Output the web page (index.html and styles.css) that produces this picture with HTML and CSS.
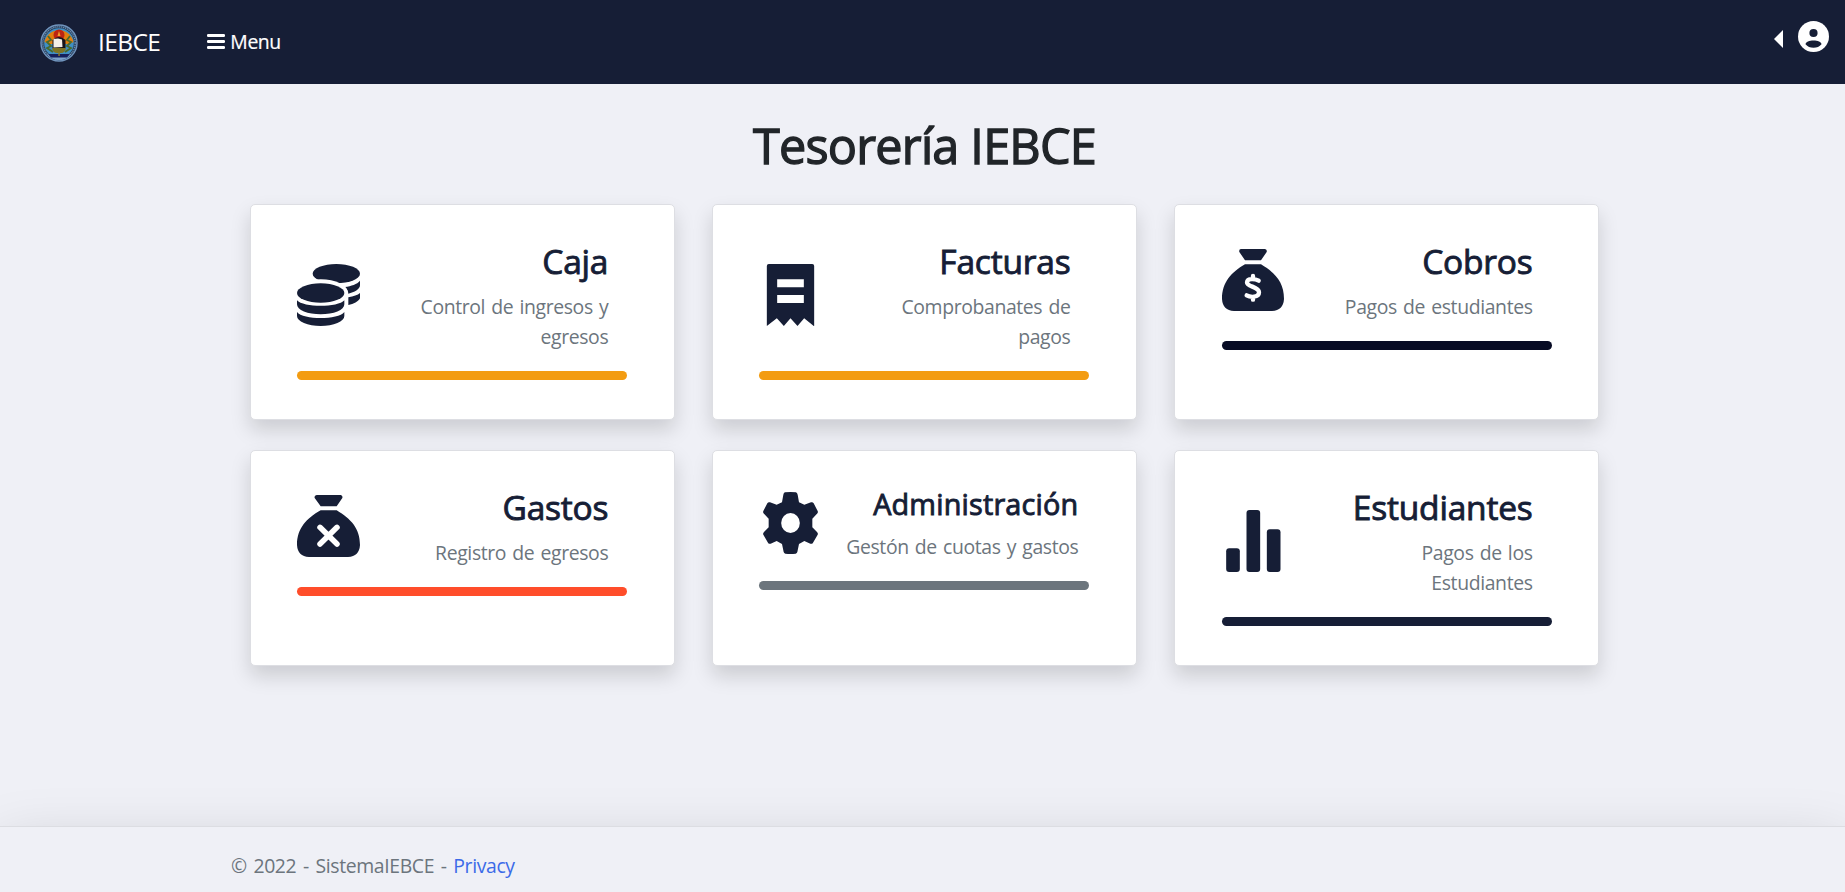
FILE: index.html
```html
<!DOCTYPE html>
<html lang="es">
<head>
<meta charset="utf-8">
<title>Tesorería IEBCE</title>
<link rel="stylesheet" href="styles.css">
</head>
<body>
<header class="navbar">
  <svg class="logo" viewBox="0 0 38 38">
    <circle cx="19" cy="19" r="18" fill="#27405f" stroke="#7094bd" stroke-width="1.4"/>
    <circle cx="19" cy="19" r="16.2" fill="none" stroke="#6f8fb0" stroke-width="1.3" stroke-dasharray="1.2 .8"/>
    <circle cx="19" cy="19" r="14.8" fill="#3f8fc4"/>
    <path d="M4.500 18A14.800 14.800 0 0 1 33.500 18L29 20H9Z" fill="#e07f10"/>
    <path d="M8 12l3 4-4 2 4 4-4 2 6 4M30 12l-3 4 4 2-4 4 4 2-6 4" fill="none" stroke="#4a6a2c" stroke-width="1.800"/>
    <circle cx="19" cy="11" r="5.500" fill="#bd2412"/>
    <path d="M19 7l1.500 5h-3z" fill="#f2a02c"/>
    <path d="M12.500 16q6.500-6 13 0v8h-13z" fill="#17131a"/>
    <path d="M13.500 15l4.500-.5 4 1 .5 7.500-9 .5z" fill="#f3efe9"/>
    <path d="M12 24h14q-1 5-5 5h-4q-4 0-5-5z" fill="#7d7425"/>
    <path d="M7 30h24q-4 6-12 6T7 30z" fill="#7da3cc"/>
    <path d="M8 30h22l-3 3.500H11z" fill="#15205c"/>
    <path d="M18.300 28h1.500v4h-1.500z" fill="#8a7a2a"/>
  </svg>
  <a class="brand">IEBCE</a>
  <a class="menu">
    <svg class="burger" viewBox="0 0 18 15"><path d="M1.200 1.500h15.600M1.200 7.500h15.600M1.200 13.500h15.600" stroke="#fff" stroke-width="2.800" stroke-linecap="round"/></svg>
    <span>Menu</span>
  </a>
  <div class="user">
    <svg class="caret" viewBox="0 0 9 18"><path d="M9 0v18L0 9z" fill="#fff"/></svg>
    <svg class="avatar" viewBox="0 0 31 31"><circle cx="15.500" cy="15.500" r="15.500" fill="#fff"/><circle cx="15.500" cy="12" r="4.100" fill="#161e36"/><path d="M7.500 23.200c0-2.500 4-3.800 8-3.800s8 1.300 8 3.800c-2 2.400-4.700 3.600-8 3.600s-6-1.200-8-3.600z" fill="#161e36"/></svg>
  </div>
</header>
<main class="main">
  <h1 class="heading">Tesorería IEBCE</h1>
  <section class="grid">
    <article class="card">
      <div class="row">
        <svg class="icon" viewBox="0 0 189 186"><g fill="#161e36"><ellipse cx="118" cy="29" rx="71" ry="29"/><path d="M144 69C163 66 180 61 189 50V64C189 76 172 85 154 89 154 82 150 75 144 69Z"/><path d="M154 100C170 97 182 93 189 87V103C184 113 170 120 154 123Z"/></g><ellipse cx="71" cy="87" rx="82" ry="41" fill="#fff"/><g fill="#161e36"><ellipse cx="71" cy="87" rx="71" ry="29"/><path d="M0 109C18 131 124 131 142 109V121A71 30 0 0 1 0 121Z"/><path d="M0 144C18 168 124 168 142 144V156A71 30 0 0 1 0 156Z"/></g></svg>
        <div class="info"><h3 class="title">Caja</h3><p class="sub">Control de ingresos y<br>egresos</p></div>
      </div>
      <div class="bar orange"></div>
    </article>
    <article class="card">
      <div class="row">
        <svg class="icon" viewBox="0 0 142 186"><path fill="#161e36" fill-rule="evenodd" d="M6 0H136Q142 0 142 6V187L112 163 92 186 71 163 51 186 30 163 0 186V6Q0 0 6 0ZM31 46V70H111V46ZM31 93V117H111V93Z"/></svg>
        <div class="info"><h3 class="title">Facturas</h3><p class="sub">Comprobanates de<br>pagos</p></div>
      </div>
      <div class="bar orange"></div>
    </article>
    <article class="card">
      <div class="row">
        <svg class="icon" viewBox="0 0 189 186"><path fill="#161e36" d="M57 0H129Q136 2 134 9L117 34H69L52 9Q50 1 57 0ZM69 46H117C160 72 186 100 186 150Q184 184 150 186H36Q2 184 0 150C0 100 28 70 69 46Z"/><path d="M110 95C101 90 76 86 75 100 74 114 111 112 111 130 111 147 84 145 74 139M93 81V90M93 144V152" fill="none" stroke="#fff" stroke-width="13" stroke-linecap="round"/></svg>
        <div class="info"><h3 class="title">Cobros</h3><p class="sub">Pagos de estudiantes</p></div>
      </div>
      <div class="bar black"></div>
    </article>
    <article class="card">
      <div class="row">
        <svg class="icon" viewBox="0 0 189 186"><path fill="#161e36" d="M59 0H131Q138 2 136 9L119 34H71L53 9Q51 1 59 0ZM71 46H119C162 72 189 100 189 150Q187 184 153 186H36Q2 184 0 150C0 100 29 70 71 46Z"/><path d="M69 97L120 147M120 97L69 147" fill="none" stroke="#fff" stroke-width="16.500" stroke-linecap="round"/></svg>
        <div class="info"><h3 class="title">Gastos</h3><p class="sub">Registro de egresos</p></div>
      </div>
      <div class="bar red"></div>
    </article>
    <article class="card">
      <div class="row admin">
        <svg class="icon" viewBox="0 0 165 186"><path fill="#161e36" fill-rule="evenodd" d="M66 1Q82.500-1 99 1 103 3 104 8L108 31 124 38 144 31Q149 29 152 34L164 57Q166 62 162 65L148 80V106L162 120Q166 124 164 128L150 152Q147 157 142 155L124 147 108 156 103 180Q102 184 98 185 82.500 187 67 185 63 184 62 180L57 156 41 147 23 155Q18 157 15 152L1 128Q-1 124 3 120L17 106V80L3 65Q-1 62 1 57L13 34Q16 29 21 31L41 38 57 31 61 8Q62 2 66 1ZM82.500 63A28 30 0 0 0 82.500 123 28 30 0 0 0 82.500 63Z"/></svg>
        <div class="info"><h4 class="title small">Administración</h4><p class="sub">Gestón de cuotas y gastos</p></div>
      </div>
      <div class="bar gray"></div>
    </article>
    <article class="card">
      <div class="row">
        <svg class="icon" viewBox="0 0 164 186"><g fill="#161e36"><rect y="115" width="41" height="71" rx="9"/><rect x="61" width="41" height="186" rx="9"/><rect x="122" y="58" width="41" height="128" rx="9"/></g></svg>
        <div class="info"><h3 class="title">Estudiantes</h3><p class="sub">Pagos de los<br>Estudiantes</p></div>
      </div>
      <div class="bar navy"></div>
    </article>
  </section>
</main>
<footer class="footer">© 2022 - SistemaIEBCE - <a class="link">Privacy</a></footer>
</body>
</html>
```
FILE: styles.css
```css
* { box-sizing: border-box; }
html, body { height: 100%; }
body {
  margin: 0;
  display: flex;
  flex-direction: column;
  overflow: hidden;
  background: #eff0f6;
  color: #212529;
  font-family: "Open Sans", "Noto Sans", sans-serif;
  font-size: 19.4px;
  line-height: 30px;
}
.navbar {
  flex: none;
  display: flex;
  align-items: flex-start;
  height: 84px;
  padding: 0 16px 0 40px;
  background: #161e36;
  color: #fff;
}
.logo { width: 38px; height: 38px; margin-top: 24px; }
.brand { margin: 26px 0 0 20px; font-size: 24.5px; line-height: 32px; letter-spacing: -.6px; }
.menu { display: flex; margin: 27px 0 0 47px; gap: 5px; letter-spacing: -.4px; -webkit-text-stroke: .2px; }
.burger { width: 18px; height: 15px; margin-top: 7px; }
.user { display: flex; margin-left: auto; gap: 15px; }
.caret { width: 9px; height: 18px; margin-top: 30px; }
.avatar { width: 31px; height: 31px; margin-top: 21px; }
.main { flex: 1; min-height: 0; }
.heading {
  margin: 0;
  padding: 31px 0 0 4px;
  height: 120px;
  text-align: center;
  font-size: 48.6px;
  line-height: 60px;
  font-weight: 400;
  letter-spacing: -.8px;
  -webkit-text-stroke: 1.3px;
}
.grid {
  display: grid;
  grid-template-columns: repeat(3, 424.5px);
  grid-auto-rows: 216px;
  gap: 30px 37.65px;
  padding-left: 250.1px;
}
.card {
  padding: 34px 46px 0 46.2px;
  background: #fff;
  border: 1px solid #dddee3;
  border-radius: 5px;
  box-shadow: 0 10px 20px rgba(0, 0, 0, .15);
}
.row { display: flex; align-items: center; justify-content: space-between; width: 330px; padding-right: 19px; }
.row.admin { padding-right: 11px; }
.icon { width: 63px; height: 62px; margin-bottom: 2px; }
.info { text-align: right; }
.title {
  margin: 0 0 9px;
  color: #161e36;
  font-size: 33.5px;
  line-height: 44px;
  font-weight: 400;
  letter-spacing: -.2px;
  -webkit-text-stroke: .9px;
}
.title.small { font-size: 28.8px; line-height: 38px; letter-spacing: .2px; }
.sub { margin: 0; color: #6c757d; letter-spacing: -.37px; word-spacing: 1.5px; }
.bar { width: 330px; height: 9px; margin-top: 19px; border-radius: 5px; }
.orange { background: #f39c12; }
.black { background: #070b24; }
.red { background: #ff4d2a; }
.gray { background: #6c757d; }
.navy { background: #161e36; }
.footer {
  position: relative;
  flex: none;
  height: 66px;
  padding: 24px 0 0 231px;
  border-top: 1px solid #dcdde2;
  background: #eff0f6;
  box-shadow: 0 20px 60px rgba(0, 0, 0, .175);
  color: #6c757d;
  letter-spacing: -.37px;
  word-spacing: 2px;
}
.link { color: #3b6ae8; }
```
